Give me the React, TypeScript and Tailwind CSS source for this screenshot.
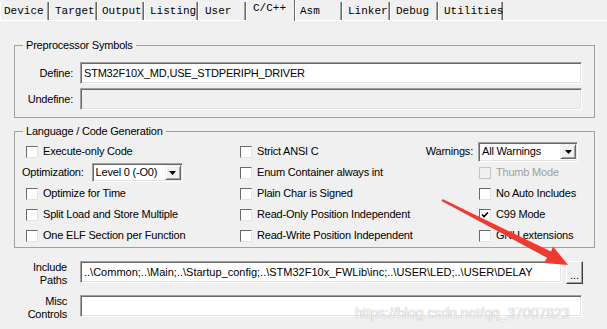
import type { ReactNode } from "react";

const tabs = [
  { label: "Device", w: 49, pl: 3 },
  { label: "Target", w: 48, pl: 5 },
  { label: "Output", w: 47, pl: 4 },
  { label: "Listing", w: 54, pl: 5 },
  { label: "User", w: 48, pl: 6 },
  { label: "C/C++", w: 49, pl: 6, active: true },
  { label: "Asm", w: 47, pl: 4 },
  { label: "Linker", w: 48, pl: 5 },
  { label: "Debug", w: 48, pl: 5 },
  { label: "Utilities", w: 65, pl: 5 },
];

const sunken =
  "border border-t-[#a0a0a0] border-l-[#a0a0a0] border-b-white border-r-white shadow-[inset_1px_1px_0_#696969,inset_-1px_-1px_0_#e3e3e3]";

const Check = ({
  label,
  checked,
  disabled,
}: {
  label: string;
  checked?: boolean;
  disabled?: boolean;
}) => (
  <div className="flex items-center gap-[5px]">
    <div
      className={
        disabled
          ? "w-[12px] h-[12px] border border-[#c4c4c4] bg-[#f0f0f0]"
          : "w-[12px] h-[12px] border border-t-[#696969] border-l-[#696969] border-b-[#e3e3e3] border-r-[#e3e3e3] bg-white flex items-center justify-center"
      }
    >
      {checked && (
        <svg width="8" height="8" viewBox="0 0 8 8">
          <path d="M1 3.5 L3 5.5 L7 1.5" stroke="#000" strokeWidth="1.6" fill="none" />
        </svg>
      )}
    </div>
    <span className={disabled ? "text-[#a0a0a0]" : "text-black"}>{label}</span>
  </div>
);

const Dropdown = ({ value, className }: { value: string; className: string }) => (
  <div className={`${sunken} bg-white flex items-center ${className}`}>
    <span className="flex-1 pl-[3px] truncate">{value}</span>
    <div className="w-[16px] h-[15px] mr-[1px] bg-[#f0f0f0] border border-t-[#f0f0f0] border-l-[#f0f0f0] border-b-[#696969] border-r-[#696969] shadow-[inset_1px_1px_0_#fff,inset_-1px_-1px_0_#a0a0a0] flex items-center justify-center">
      <svg width="7" height="4" viewBox="0 0 7 4">
        <path d="M0 0 H7 L3.5 4 Z" fill="#000" />
      </svg>
    </div>
  </div>
);

const Group = ({ title, className, children }: { title: string; className: string; children: ReactNode }) => (
  <fieldset className={`ml-[14px] w-[581px] border border-[#a0a0a0] pl-[11px] ${className}`}>
    <legend className="-ml-[3px] px-[3px] leading-[14px]">{title}</legend>
    {children}
  </fieldset>
);

const LabelField = ({ label, children }: { label: ReactNode; children: ReactNode }) => (
  <div className="flex items-start">
    <div className="w-[67px] text-right leading-[13px]">{label}</div>
    <div className="ml-[13px] flex gap-[4px]">{children}</div>
  </div>
);

export default function App() {
  return (
    <div
      className="relative w-[607px] h-[329px] overflow-hidden bg-[#f0f0f0] text-[11px] tracking-[-0.2px] text-black"
      style={{ fontFamily: '"Liberation Sans", Arial, sans-serif' }}
    >
      {/* tab strip */}
      <div className="flex items-end h-[21px] border-b border-white">
        {tabs.map((t) => (
          <div
            key={t.label}
            style={{ width: t.w, paddingLeft: t.pl, fontFamily: '"Liberation Mono", monospace' }}
            className={
              t.active
                ? "relative h-[21px] -mb-px bg-[#f0f0f0] border-l border-white border-r border-r-[#696969] pt-[2px] leading-[12px] tracking-normal whitespace-nowrap"
                : "h-[18px] border-l border-white border-r border-r-[#696969] shadow-[inset_-1px_0_0_#a0a0a0] pt-[3px] leading-[12px] tracking-normal whitespace-nowrap"
            }
          >
            {t.label}
          </div>
        ))}
      </div>

      <Group title="Preprocessor Symbols" className="mt-[17px] pb-[7px]">
        <div className="mt-[10px] flex flex-col gap-[4px]">
          <div className="flex items-center">
            <span className="w-[47px] text-right">Define:</span>
            <div className={`${sunken} ml-[7px] w-[502px] h-[22px] bg-white flex items-center pl-[3px]`}>
              STM32F10X_MD,USE_STDPERIPH_DRIVER
            </div>
          </div>
          <div className="flex items-center">
            <span className="w-[47px] text-right">Undefine:</span>
            <div className={`${sunken} ml-[7px] w-[502px] h-[22px] bg-[#f0f0f0]`} />
          </div>
        </div>
      </Group>

      <Group title="Language / Code Generation" className="mt-[6px] pb-[1px]">
        <div className="mt-[3px] grid grid-cols-[214px_184px_1fr] auto-rows-[21px] items-center">
          <Check label="Execute-only Code" />
          <Check label="Strict ANSI C" />
          <div className="flex items-center">
            <span className="w-[49px] text-right">Warnings:</span>
            <Dropdown value="All Warnings" className="ml-[5px] w-[100px] h-[20px]" />
          </div>

          <div className="flex items-center -ml-[4px]">
            <span>Optimization:</span>
            <Dropdown value="Level 0 (-O0)" className="ml-[8px] w-[91px] h-[19px]" />
          </div>
          <Check label="Enum Container always int" />
          <div className="pl-[55px]">
            <Check label="Thumb Mode" disabled />
          </div>

          <Check label="Optimize for Time" />
          <Check label="Plain Char is Signed" />
          <div className="pl-[55px]">
            <Check label="No Auto Includes" />
          </div>

          <Check label="Split Load and Store Multiple" />
          <Check label="Read-Only Position Independent" />
          <div className="pl-[55px]">
            <Check label="C99 Mode" checked />
          </div>

          <Check label="One ELF Section per Function" />
          <Check label="Read-Write Position Independent" />
          <div className="pl-[55px]">
            <Check label="GNU extensions" />
          </div>
        </div>
      </Group>

      <div className="mt-[13px] flex flex-col">
        <LabelField
          label={
            <>
              Include
              <br />
              Paths
            </>
          }
        >
          <div className={`${sunken} w-[482px] h-[22px] bg-white flex items-center pl-[3px] tracking-normal whitespace-nowrap overflow-hidden`}>
            ..\Common;..\Main;..\Startup_config;..\STM32F10x_FWLib\inc;..\USER\LED;..\USER\DELAY
          </div>
          <div className="w-[17px] h-[23px] bg-[#f0f0f0] border border-t-white border-l-white border-b-[#404040] border-r-[#404040] shadow-[inset_-1px_-1px_0_#a0a0a0] flex items-end justify-center pb-[4px] leading-[8px] tracking-normal">
            ...
          </div>
        </LabelField>
        <div className="mt-[8px]">
          <LabelField
            label={
              <>
                Misc
                <br />
                Controls
              </>
            }
          >
            <div className={`${sunken} w-[502px] h-[22px] bg-white`} />
          </LabelField>
        </div>
        <div className="mt-[10px] ml-[80px]">
          <div className={`${sunken} w-[502px] h-[30px] bg-[#f0f0f0]`} />
        </div>
      </div>

      {/* red annotation arrow */}
      <svg className="absolute left-0 top-0 pointer-events-none" width="607" height="329" viewBox="0 0 607 329">
        <polygon
          points="441.5,200.9 442.5,199.1 551,251.5 553,246.5 568,265 544,263 547,257.8"
          fill="#f03a30"
        />
      </svg>

      {/* watermark */}
      <div
        className="absolute left-[355px] top-[303px] text-[14px] tracking-normal text-white/90 pointer-events-none [text-shadow:0_0_1px_#8a8a8a]"
        style={{ fontFamily: '"Liberation Sans", Arial, sans-serif' }}
      >
        https://blog.csdn.net/qq_37007823
      </div>
    </div>
  );
}
